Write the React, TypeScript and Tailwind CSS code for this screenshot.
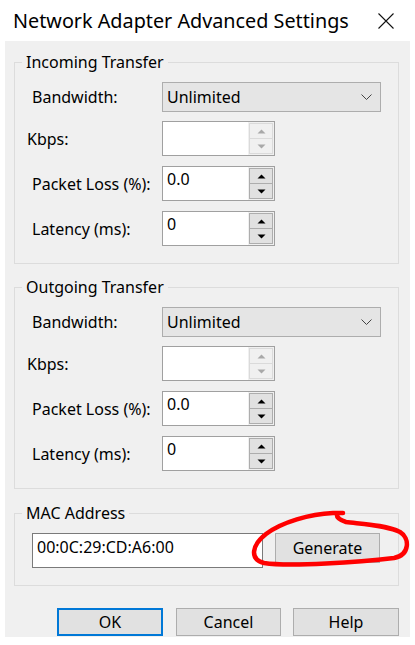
import React from "react";

const Up = ({ c }: { c: string }) => (
  <svg width="9" height="5" viewBox="0 0 9 5"><path d="M0.5 4.5 L4.5 0.5 L8.5 4.5 Z" fill={c} /></svg>
);
const Down = ({ c }: { c: string }) => (
  <svg width="9" height="5" viewBox="0 0 9 5"><path d="M0.5 0.5 L4.5 4.5 L8.5 0.5 Z" fill={c} /></svg>
);

function Spinner({ value, disabled }: { value: string; disabled?: boolean }) {
  const btn = disabled
    ? "flex flex-1 items-center justify-center border border-[#dadada] bg-[#f0f0f0]"
    : "flex flex-1 items-center justify-center border border-[#adadad] bg-[#e1e1e1]";
  const c = disabled ? "#a8a8a8" : "#000";
  return (
    <div className="flex h-[35px] w-[113px] border border-[#a0a0a0] bg-white">
      <div className="flex-1 pl-[4px] pt-[2px] leading-[20px]">{value}</div>
      <div className="flex w-[26px] flex-col bg-[#f0f0f0] px-[1px] py-[1px]">
        <div className={btn}><Up c={c} /></div>
        <div className={btn + " -mt-px"}><Down c={c} /></div>
      </div>
    </div>
  );
}

function Combo() {
  return (
    <div className="flex h-[30px] w-[219px] items-center justify-between border border-[#adadad] bg-[#e5e5e5] pl-[4px] pr-[8px]">
      <span>Unlimited</span>
      <svg width="11" height="6" viewBox="0 0 11 6"><path d="M0.5 0.5 L5.5 5.5 L10.5 0.5" stroke="#444" strokeWidth="1" fill="none" /></svg>
    </div>
  );
}

function Row({ label, children, labelPad = "pl-[17px]" }: { label: string; children: React.ReactNode; labelPad?: string }) {
  return (
    <div className="flex items-center">
      <div className={"w-[147px] " + labelPad}>{label}</div>
      {children}
    </div>
  );
}

function Group({ title, children, pb }: { title: string; children: React.ReactNode; pb: string }) {
  return (
    <fieldset className={"ml-[9px] mr-[11px] border border-[#dcdcdc] " + pb}>
      <legend className="ml-[7px] px-[4px] leading-[18px]">{title}</legend>
      {children}
    </fieldset>
  );
}

function Transfer({ title }: { title: string }) {
  return (
    <Group title={title} pb="pb-[17px]">
      <div className="mt-[11px] flex flex-col">
        <Row label="Bandwidth:"><Combo /></Row>
        <div className="mt-[9px]"><Row label="Kbps:" labelPad="pl-[12px]"><Spinner value="" disabled /></Row></div>
        <div className="mt-[10px]"><Row label="Packet Loss (%):"><Spinner value="0.0" /></Row></div>
        <div className="mt-[10px]"><Row label="Latency (ms):"><Spinner value="0" /></Row></div>
      </div>
    </Group>
  );
}

export default function App() {
  return (
    <div className="relative h-[645px] w-[415px] overflow-hidden bg-white text-[16px] text-black" style={{ fontFamily: '"Noto Sans", sans-serif' }}>
      <div className="flex h-[41px] items-center justify-between pl-[13px] pr-[21px]">
        <span className="text-[19.8px] leading-[24px]">Network Adapter Advanced Settings</span>
        <svg width="16" height="16" viewBox="0 0 16 16"><path d="M0.5 0.5 L15.5 15.5 M15.5 0.5 L0.5 15.5" stroke="#111" strokeWidth="1.1" /></svg>
      </div>
      <div className="mx-[5px] flex h-[596px] flex-col bg-[#f0f0f0] pt-[12px]">
        <Transfer title="Incoming Transfer" />
        <div className="mt-[14px]"><Transfer title="Outgoing Transfer" /></div>
        <div className="mt-[15px]">
          <Group title="MAC Address" pb="pb-[17px]">
            <div className="mt-[11px] flex items-start pl-[17px]">
              <div className="flex h-[35px] w-[231px] items-start border border-[#7a7a7a] bg-white pl-[4px] pt-[3px] leading-[20px]">00:0C:29:CD:A6:00</div>
              <div className="ml-[12px] flex h-[30px] w-[105px] items-center justify-center border border-[#adadad] bg-[#e1e1e1]">Generate</div>
            </div>
          </Group>
        </div>
        <div className="mt-[22px] flex pl-[52px]">
          <div className="flex h-[28px] w-[106px] items-center justify-center border-2 border-[#0078d7] bg-[#e1e1e1]">OK</div>
          <div className="ml-[13px] flex h-[28px] w-[105px] items-center justify-center border border-[#adadad] bg-[#e1e1e1]">Cancel</div>
          <div className="ml-[12px] flex h-[28px] w-[106px] items-center justify-center border border-[#adadad] bg-[#e1e1e1]">Help</div>
        </div>
      </div>
      <svg className="pointer-events-none absolute left-0 top-0" width="415" height="645" viewBox="0 0 415 645">
        <path d="M343 513 L333 513 C 310 514, 282 522, 266 534 C 252 545, 249 559, 264 563 C 290 567, 360 562, 394 558 C 410 555, 410 538, 400 532 C 386 525, 362 524, 346 522 C 339 520, 336 517, 337 513" stroke="#f00" strokeWidth="4.5" fill="none" strokeLinecap="round" strokeLinejoin="round" />
      </svg>
    </div>
  );
}
